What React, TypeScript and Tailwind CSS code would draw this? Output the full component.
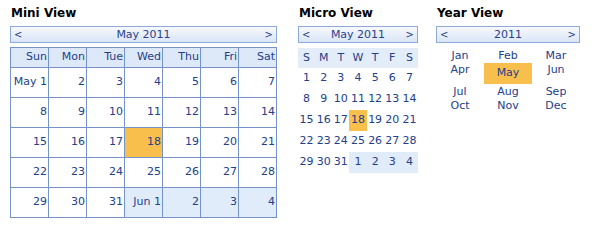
const font = { fontFamily: '"DejaVu Sans", Verdana, sans-serif' };

type Cell = { label: string; other?: boolean; today?: boolean };

const weeks: Cell[][] = [
  [{ label: "May 1" }, { label: "2" }, { label: "3" }, { label: "4" }, { label: "5" }, { label: "6" }, { label: "7" }],
  [{ label: "8" }, { label: "9" }, { label: "10" }, { label: "11" }, { label: "12" }, { label: "13" }, { label: "14" }],
  [{ label: "15" }, { label: "16" }, { label: "17" }, { label: "18", today: true }, { label: "19" }, { label: "20" }, { label: "21" }],
  [{ label: "22" }, { label: "23" }, { label: "24" }, { label: "25" }, { label: "26" }, { label: "27" }, { label: "28" }],
  [{ label: "29" }, { label: "30" }, { label: "31" }, { label: "Jun 1", other: true }, { label: "2", other: true }, { label: "3", other: true }, { label: "4", other: true }],
];

const dayNames = ["Sun", "Mon", "Tue", "Wed", "Thu", "Fri", "Sat"];

function NavBar({ title }: { title: string }) {
  return (
    <div className="flex h-[17px] items-center justify-between border border-[#8eaad8] bg-gradient-to-b from-[#f7f9fd] to-[#d9e5f7] px-[3px] text-[11px] leading-none text-[#2a3f8c]">
      <span className="text-[10px]">&lt;</span>
      <span>{title}</span>
      <span className="text-[10px]">&gt;</span>
    </div>
  );
}

function Heading({ children }: { children: string }) {
  return <h2 className="mb-[5px] pl-[1px] text-[12px] font-bold leading-[16px] text-black">{children}</h2>;
}

function MiniView() {
  return (
    <div className="w-[267px]">
      <Heading>Mini View</Heading>
      <NavBar title="May 2011" />
      <table className="mt-[4px] w-full table-fixed border-collapse text-[11px] text-[#23408a]">
        <thead>
          <tr className="h-[20px] bg-[#dde8f8]">
            {dayNames.map((d) => (
              <th key={d} className="border border-[#7593c9] pr-[1px] text-right font-normal">
                {d}
              </th>
            ))}
          </tr>
        </thead>
        <tbody>
          {weeks.map((w, i) => (
            <tr key={i} className="h-[30px]">
              {w.map((c, j) => (
                <td
                  key={j}
                  className={`whitespace-nowrap border border-[#7593c9] pr-[1px] text-right ${
                    c.today ? "bg-[#f9bf4d]" : c.other ? "bg-[#e1ecfb]" : "bg-white"
                  }`}
                >
                  {c.label}
                </td>
              ))}
            </tr>
          ))}
        </tbody>
      </table>
    </div>
  );
}

function MicroView() {
  return (
    <div className="ml-[21px] w-[120px]">
      <Heading>Micro View</Heading>
      <NavBar title="May 2011" />
      <div className="mt-[5px] grid grid-cols-7 text-center text-[11px] text-[#23408a]">
        {["S", "M", "T", "W", "T", "F", "S"].map((d, i) => (
          <div key={i} className="flex h-[20px] items-center justify-center bg-[#e3ecf9]">
            {d}
          </div>
        ))}
        {weeks.flat().map((c, i) => (
          <div
            key={i}
            className={`flex h-[21px] items-center justify-center ${
              c.today ? "bg-[#f9bf4d]" : c.other ? "bg-[#e1ecfb]" : ""
            }`}
          >
            {c.label.replace(/^[A-Za-z]+ /, "")}
          </div>
        ))}
      </div>
    </div>
  );
}

const months = [
  ["Jan", "Feb", "Mar"],
  ["Apr", "May", "Jun"],
  ["Jul", "Aug", "Sep"],
  ["Oct", "Nov", "Dec"],
];

function YearView() {
  return (
    <div className="ml-[18px] w-[144px]">
      <Heading>Year View</Heading>
      <NavBar title="2011" />
      <div className="mt-[5px] grid grid-cols-3 text-center text-[11px] text-[#23408a]">
        {months.map((row, i) =>
          row.map((m) => (
            <div
              key={m}
              className={`leading-[14px] ${i % 2 === 0 ? "h-[15px] pt-[1px]" : "h-[21px]"} ${
                m === "May" ? "bg-[#f9bf4d] pt-[3px]" : ""
              }`}
            >
              {m}
            </div>
          ))
        )}
      </div>
    </div>
  );
}

export default function App() {
  return (
    <div className="flex h-[229px] w-[599px] bg-white pl-[10px] pt-[5px]" style={font}>
      <MiniView />
      <MicroView />
      <YearView />
    </div>
  );
}
